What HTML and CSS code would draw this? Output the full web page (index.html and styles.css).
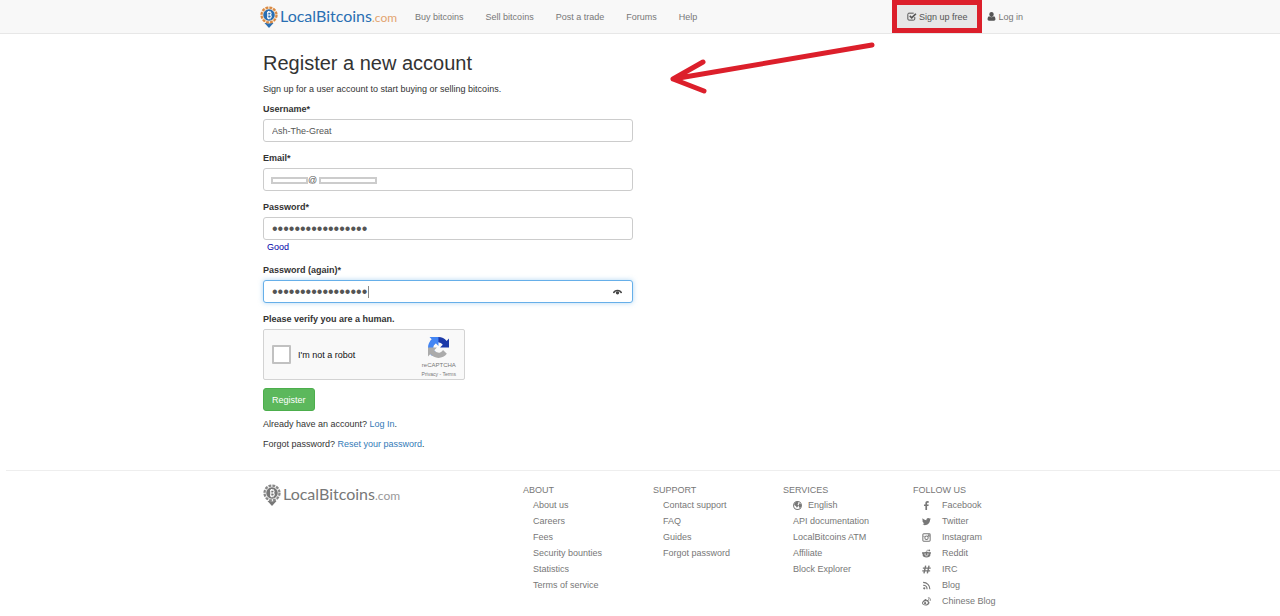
FILE: index.html
```html
<!DOCTYPE html>
<html lang="en">
<head>
<meta charset="utf-8">
<title>Register a new account - LocalBitcoins.com</title>
<link rel="stylesheet" href="styles.css">
</head>
<body>
<svg class="defs" aria-hidden="true">
  <symbol id="pin" viewBox="0 0 36 44">
    <path class="pin-tail" d="M9 34 L18 44 L27 34 Z"/>
    <circle class="pin-face" cx="18" cy="18" r="17"/>
    <circle class="pin-ring" cx="18" cy="18" r="15" fill="none" stroke-width="4.5" stroke-dasharray="5.4 2.5"/>
    <circle class="pin-core" cx="18" cy="18" r="11.5"/>
    <path class="pin-b" d="M14 12.5h5.5a2.7 2.7 0 0 1 0 5.4H15.5M19.5 17.9a3 3 0 0 1 0 6H14M15.5 12.5v11.4M17 10v2.5M20 10v2.5M17 24v2.5M20 24v2.5" fill="none" stroke-width="2.2"/>
  </symbol>
</svg>

<header class="navbar">
  <div class="container navbar-inner">
    <a class="brand" href="#">
      <svg class="brand-pin"><use href="#pin"/></svg><span class="brand-name">LocalBitcoins<span class="brand-tld">.com</span></span>
    </a>
    <nav class="nav-links">
      <a href="#">Buy bitcoins</a>
      <a href="#">Sell bitcoins</a>
      <a href="#">Post a trade</a>
      <a href="#">Forums</a>
      <a href="#">Help</a>
    </nav>
    <div class="nav-user">
      <a class="signup" href="#">
        <svg class="nav-icon" viewBox="0 0 18 16"><path d="M14 9v3.500a2 2 0 0 1-2 2H3.500a2 2 0 0 1-2-2V4a2 2 0 0 1 2-2H12" fill="none" stroke="currentColor" stroke-width="1.800"/><path d="M5 7l3.500 3.500L16 3" fill="none" stroke="currentColor" stroke-width="3"/></svg>Sign up free
      </a>
      <a class="login" href="#">
        <svg class="nav-icon user" viewBox="0 0 14 16"><path d="M7 0c2.300 0 3.800 1.600 3.800 4S9.300 9 7 9 3.200 6.400 3.200 4 4.700 0 7 0z"/><path d="M3 7.500C1 8 0 10 0 13c0 1.700 1 2.500 2.500 2.500h9c1.500 0 2.500-.8 2.500-2.500 0-3-1-5-3-5.500-2 2.200-6 2.200-8 0z"/></svg>Log in
      </a>
    </div>
  </div>
</header>

<main class="page">
  <div class="container">
    <svg class="arrow" viewBox="0 0 210 54" aria-hidden="true"><path d="M204 5L5 39M35 22L5 39L36 51"/></svg>
    <h1>Register a new account</h1>
    <p class="lead">Sign up for a user account to start buying or selling bitcoins.</p>
    <form class="form">
      <div class="field">
        <label for="username">Username*</label>
        <input id="username" type="text" value="Ash-The-Great">
      </div>
      <div class="field">
        <label for="email">Email*</label>
        <div class="control">
          <input id="email" class="masked" type="text" value="@">
          <span class="mask mask-user"></span><span class="mask mask-host"></span>
        </div>
      </div>
      <div class="field">
        <label for="password">Password*</label>
        <input id="password" type="password" value="ashthegreat123456">
        <div class="strength">Good</div>
      </div>
      <div class="field">
        <label for="password2">Password (again)*</label>
        <div class="control">
          <input id="password2" class="focused" type="password" value="ashthegreat123456">
          <span class="caret"></span>
          <svg class="reveal" viewBox="0 0 16 10"><path d="M1 7C3 .8 13 .8 15 7" fill="none" stroke="#444" stroke-width="2.500"/><circle cx="8" cy="6.500" r="3" fill="#444"/></svg>
        </div>
      </div>
      <div class="field">
        <div class="verify">Please verify you are a human.</div>
        <div class="captcha">
          <input id="robot" type="checkbox">
          <label for="robot">I'm not a robot</label>
          <div class="captcha-brand">
            <svg class="captcha-logo" viewBox="0 0 64 64">
              <path fill="#1c3aa9" d="M64 31.955l-.015-1.366V4.687l-7.161 7.161C50.963 4.674 42.033.093 32.034.093c-10.406 0-19.651 4.960-25.492 12.642l11.738 11.861a15.550 15.550 0 0 1 4.754-5.334c2.050-1.600 4.954-2.907 8.999-2.907.489 0 .866.057 1.143.165 5.012.396 9.356 3.161 11.914 7.176l-8.309 8.309 27.219-.05z"/>
              <path fill="#4285f4" d="M31.862.094l-1.366.015H4.594l7.161 7.161C4.581 13.131 0 22.060 0 32.060c0 10.406 4.960 19.651 12.642 25.492l11.861-11.738a15.550 15.550 0 0 1-5.334-4.754c-1.600-2.050-2.907-4.954-2.907-8.999 0-.489.057-.866.165-1.143.396-5.012 3.161-9.356 7.176-11.914l8.309 8.309-.05-27.219z"/>
              <path fill="#ababab" d="M.001 32.045l.015 1.366v25.902l7.161-7.161c5.861 7.174 14.791 11.755 24.790 11.755 10.406 0 19.651-4.960 25.492-12.642L45.721 39.404a15.550 15.550 0 0 1-4.754 5.334c-2.050 1.600-4.954 2.907-8.999 2.907-.489 0-.866-.057-1.143-.165-5.012-.396-9.356-3.161-11.914-7.176l8.309-8.309-27.219.05z"/>
            </svg>
            <span class="captcha-name">reCAPTCHA</span>
            <span class="captcha-terms"><a href="#">Privacy</a> - <a href="#">Terms</a></span>
          </div>
        </div>
      </div>
      <button class="register" type="submit">Register</button>
    </form>
    <p class="hint">Already have an account? <a href="#">Log In</a>.</p>
    <p class="hint">Forgot password? <a href="#">Reset your password</a>.</p>
  </div>
</main>

<footer class="footer">
  <div class="container footer-grid">
    <a class="brand brand-grey" href="#">
      <svg class="brand-pin"><use href="#pin"/></svg><span class="brand-name">LocalBitcoins<span class="brand-tld">.com</span></span>
    </a>
    <section>
      <h2>ABOUT</h2>
      <ul>
        <li><a href="#">About us</a></li>
        <li><a href="#">Careers</a></li>
        <li><a href="#">Fees</a></li>
        <li><a href="#">Security bounties</a></li>
        <li><a href="#">Statistics</a></li>
        <li><a href="#">Terms of service</a></li>
      </ul>
    </section>
    <section>
      <h2>SUPPORT</h2>
      <ul>
        <li><a href="#">Contact support</a></li>
        <li><a href="#">FAQ</a></li>
        <li><a href="#">Guides</a></li>
        <li><a href="#">Forgot password</a></li>
      </ul>
    </section>
    <section>
      <h2>SERVICES</h2>
      <ul>
        <li><a class="with-icon globe" href="#"><svg viewBox="0 0 16 16"><circle cx="8" cy="8" r="7" fill="none" stroke="currentColor" stroke-width="1.800"/><path d="M3 3l4-2 3 2-2 3 2 2-3 4-2-3-3-2zM11 4l4 2-1 5-3 1-1-4z"/></svg>English</a></li>
        <li><a href="#">API documentation</a></li>
        <li><a href="#">LocalBitcoins ATM</a></li>
        <li><a href="#">Affiliate</a></li>
        <li><a href="#">Block Explorer</a></li>
      </ul>
    </section>
    <section>
      <h2>FOLLOW US</h2>
      <ul>
        <li><a class="with-icon" href="#"><svg viewBox="0 0 16 16"><path d="M12 .3v2.600h-1.500C9.300 2.900 9 3.500 9 4.300V6h2.900l-.4 2.800H9V16H6V8.800H3.500V6H6V4C6 1.600 7.500.1 9.800.1z"/></svg>Facebook</a></li>
        <li><a class="with-icon" href="#"><svg viewBox="0 0 16 16"><path d="M16 3.500l-1.700 1.600C14.500 10.500 10.500 14.500 5 14.500c-1.800 0-3.500-.5-5-1.400 1.700.2 3.300-.3 4.600-1.300-1.400 0-2.500-.9-2.900-2.200h1.400C1.600 9.200.6 8 .6 6.300l1.400.4C.7 5.600.3 3.900 1.100 2.400 2.700 4.400 5 5.600 7.800 5.800 7.300 3.500 8.900 1.600 11 1.600c1 0 1.900.4 2.500 1.100l2-.8-1.400 1.900z"/></svg>Twitter</a></li>
        <li><a class="with-icon" href="#"><svg viewBox="0 0 16 16"><rect x="1.500" y="1.500" width="13" height="13" rx="1.500" fill="none" stroke="currentColor" stroke-width="1.800"/><path d="M2 6h3M11 6h3M11 3h2v2h-2z" stroke="currentColor"/><circle cx="8" cy="8.500" r="3" fill="none" stroke="currentColor" stroke-width="1.800"/></svg>Instagram</a></li>
        <li><a class="with-icon" href="#"><svg viewBox="0 0 16 16"><path fill-rule="evenodd" d="M8 5c4 0 7 2 7 5s-3 5-7 5-7-2-7-5 3-5 7-5zM4.500 8v2h2V8zM9.500 8v2h2V8zM5 11.500c2 2 4 2 6 0z"/><circle cx="1.800" cy="7" r="1.800"/><circle cx="14.200" cy="7" r="1.800"/><circle cx="13" cy="2.500" r="1.500"/><path d="M8 6l1-4 4 .5" fill="none" stroke="currentColor"/></svg>Reddit</a></li>
        <li><a class="with-icon" href="#"><svg viewBox="0 0 16 16"><path d="M6.500 1L3.500 15M12.500 1l-3 14M1.500 5.500H15.500M.5 10.500h14" fill="none" stroke="currentColor" stroke-width="2.500"/></svg>IRC</a></li>
        <li><a class="with-icon" href="#"><svg viewBox="0 0 16 16"><circle cx="4" cy="13" r="2"/><path d="M2 7.500c4 0 7 3 7 7M2 2.500c7 0 12 5 12 12" fill="none" stroke="currentColor" stroke-width="2"/></svg>Blog</a></li>
        <li><a class="with-icon" href="#"><svg viewBox="0 0 16 16"><path fill-rule="evenodd" d="M5.500 4c2-.8 2.800.2 2.300 1.800 2.500-1 4.500-.4 3.700 1.600 4 1.600 1 7.600-5 7.600-3.500 0-6.500-1.700-6.500-4.300C0 8.500 3 5 5.500 4zM6.500 7.500C3.500 8 1.500 9.500 1.800 11.200c.7 3.300 8.500 2.800 8.700-1C10.600 8.200 9 7.200 6.500 7.500z"/><circle cx="5.500" cy="11" r="2"/><path d="M10.500 1.500c3.500-.5 5.500 2 4.500 5M10.800 4c1.500-.2 2.200.8 1.900 2" fill="none" stroke="currentColor" stroke-width="1.500"/></svg>Chinese Blog</a></li>
      </ul>
    </section>
  </div>
</footer>
</body>
</html>
```
FILE: styles.css
```css
* { box-sizing: border-box; }
body {
  margin: 0;
  background: #fff;
  color: #333;
  font: 9px/14px "Liberation Sans", Arial, sans-serif;
}
a { color: #337ab7; text-decoration: none; }
.defs { position: absolute; width: 0; height: 0; }
.container { max-width: 760px; margin: 0 auto; position: relative; }
.navbar, .page, .footer { padding-left: 6px; }

.navbar { background: #f8f8f8; border-bottom: 1px solid #e7e7e7; }
.navbar-inner { display: flex; height: 33px; }
.brand {
  --pin-main: #2a6fb3;
  --pin-face: #fbe3c8;
  --pin-ring: #d98a45;
  display: flex;
  align-items: center;
  gap: 2px;
  color: #2a6fb3;
}
.navbar .brand { margin-left: -3px; }
.brand-pin { width: 18px; height: 22px; }
.pin-tail, .pin-core { fill: var(--pin-main); }
.pin-face { fill: var(--pin-face); }
.pin-ring { stroke: var(--pin-ring); }
.pin-b { stroke: #fff; }
.brand-name { font: 16px/20px Lato, sans-serif; white-space: nowrap; }
.brand-tld { font-size: 12px; color: #e3a46f; }
.nav-links { display: flex; margin-left: 7px; }
.nav-links a, .nav-user a { display: flex; align-items: center; color: #777; }
.nav-links a { padding: 0 11px; }
.nav-user a { padding: 0 10px; }
.nav-user { display: flex; margin-left: auto; margin-right: -10px; }
.nav-user .signup { position: relative; background: #e7e7e7; color: #555; }
.signup::after {
  content: "";
  position: absolute;
  inset: 0 -5px;
  border: 5px solid #dc1f2b;
}
.nav-icon { width: 10px; height: 9px; margin-right: 2px; fill: #555; }
.nav-icon.user { width: 9px; }

.page { padding-top: 17px; }
.arrow { position: absolute; left: 405px; top: -11px; width: 210px; height: 54px; overflow: visible; }
.arrow path { fill: none; stroke: #dc1f2b; stroke-width: 5; stroke-linecap: round; stroke-linejoin: round; }
h1 { margin: 0 0 7px; font-size: 20px; line-height: 24px; font-weight: 400; }
.lead { margin: 0 0 6px; }
.form { max-width: 370px; }
.field { margin-bottom: 9px; }
.field > label, .verify { display: block; font-weight: 700; margin-bottom: 3px; }
.control { position: relative; }
input[type="text"], input[type="password"] {
  display: block;
  width: 100%;
  height: 23px;
  padding: 0 8px;
  border: 1px solid #ccc;
  border-radius: 3px;
  background: #fff;
  color: #555;
  font: 9px/14px "Liberation Sans", Arial, sans-serif;
  outline: none;
}
input[type="password"] { font-size: 16px; }
input.masked { padding-left: 44px; }
input.focused { border-color: #66afe9; box-shadow: 0 0 5px rgba(102, 175, 233, .5); }
.mask { position: absolute; top: 9px; height: 7px; border: 2px solid #ccc; background: #fff; }
.mask-user { left: 8px; width: 37px; }
.mask-host { left: 56px; width: 58px; }
.caret { position: absolute; left: 105px; top: 6px; width: 1px; height: 12px; background: #888; }
.reveal { position: absolute; right: 11px; top: 9px; width: 9px; height: 6px; }
.strength { color: #0000a8; padding-left: 4px; }

.captcha {
  display: flex;
  align-items: center;
  width: 202px;
  height: 51px;
  margin-bottom: -1px;
  padding: 0 8px;
  background: #f9f9f9;
  border: 1px solid #d3d3d3;
  border-radius: 2px;
}
.captcha input {
  appearance: none;
  width: 19px;
  height: 19px;
  margin: 0 7px 0 0;
  border: 2px solid #c1c1c1;
  border-radius: 1px;
  background: #fff;
}
.captcha label { color: #111; }
.captcha-brand { display: flex; flex-direction: column; align-items: center; margin-left: auto; padding-top: 5px; color: #777; }
.captcha-logo { width: 21px; height: 21px; }
.captcha-name { font-size: 6px; line-height: 10px; margin-top: 2px; }
.captcha-terms { font-size: 5px; line-height: 8px; }
.captcha-terms a { color: inherit; }
.register {
  display: block;
  height: 23px;
  padding: 0 8px;
  border: 1px solid #4cae4c;
  border-radius: 3px;
  background: #5cb85c;
  color: #fff;
  font: inherit;
}
.hint { margin: 6px 0 0; }

.footer { margin-top: 19px; background: linear-gradient(#eee, #eee) 6px 0 / 100% 1px no-repeat; padding-top: 13px; }
.footer-grid { display: grid; grid-template-columns: 2fr 1fr 1fr 1fr 1fr; max-width: 780px; }
.footer-grid > * { padding-left: 10px; }
.brand-grey {
  --pin-main: #777;
  --pin-face: #eee;
  --pin-ring: #888;
  align-self: start;
  padding-top: 1px;
  color: #777;
}
.footer h2 { margin: 0; font-size: 9px; line-height: 14px; font-weight: 400; color: #777; }
.footer ul { margin: 0; padding: 0 0 0 10px; list-style: none; line-height: 16px; }
.footer li a { color: #777; }
.footer .brand-tld { color: #999; }
.with-icon { display: flex; align-items: center; }
.with-icon svg { width: 9px; height: 9px; margin: 0 11px 0 -1px; fill: currentColor; }
.with-icon.globe svg { margin: 0 6px 0 0; }
```
